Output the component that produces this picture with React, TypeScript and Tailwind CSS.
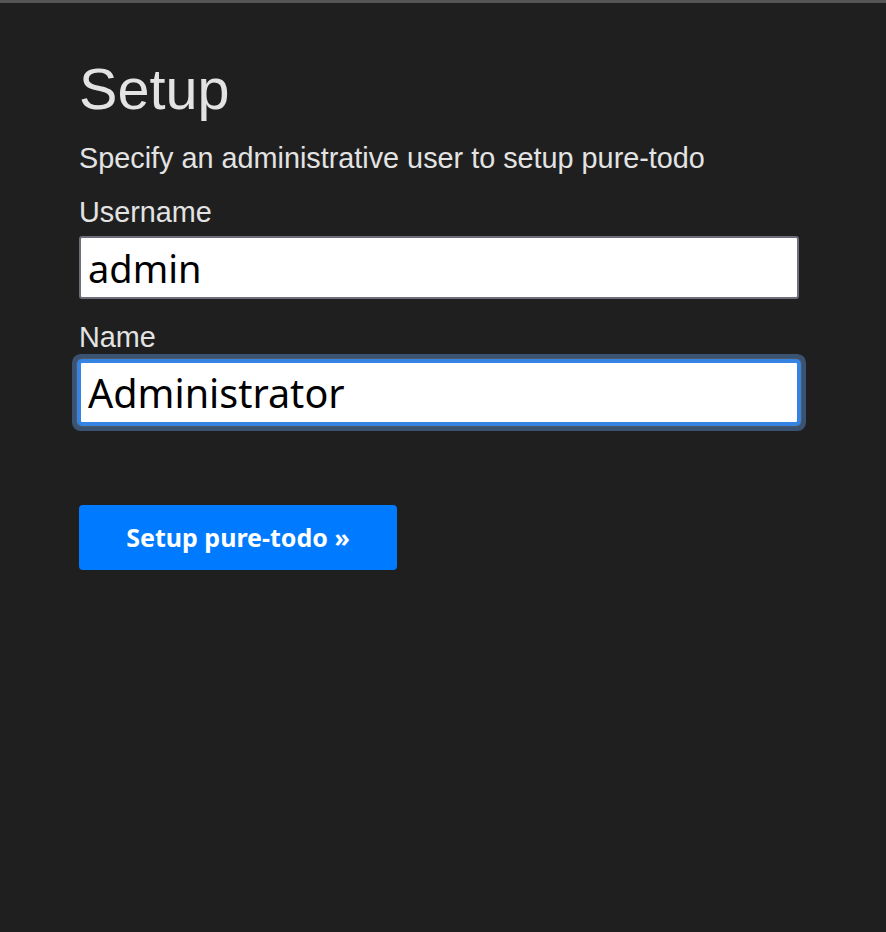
import React from 'react';

export default function App() {
  return (
    <div className="min-h-[932px] bg-[#1f1f1f] border-t-[3px] border-[#555555] font-['Liberation_Sans',Arial,sans-serif] text-[#e3e3e3]">
      <div className="px-[79px] pt-[54px] max-w-[878px]">
        <h1 className="text-[57.6px] leading-[64px]">Setup</h1>
        <p className="mt-[20px] text-[28.8px] leading-[34px]">Specify an administrative user to setup pure-todo</p>

        <form className="mt-[20px] w-[720px]">
          <label className="block text-[28.8px] leading-[34px]">Username</label>
          <input
            type="text"
            defaultValue="admin"
            className="mt-[7px] block w-[720px] h-[63px] bg-white text-black rounded-[3px] border-2 border-[#6e6d7a] px-[7px] text-[38px] font-['Noto_Sans',sans-serif] outline-none"
          />

          <label className="block mt-[21px] text-[28.8px] leading-[34px]">Name</label>
          <input
            type="text"
            defaultValue="Administrator"
            className="mt-[7px] block w-[720px] h-[63px] bg-white text-black rounded-[3px] border-2 border-[#3584e4] px-[7px] text-[39.5px] font-['Noto_Sans',sans-serif] outline-none shadow-[0_0_0_2px_#3584e4,0_0_0_3px_#4f5865,0_0_0_7px_#3a5372]"
          />

          <button
            type="button"
            className="mt-[81px] w-[318px] h-[65px] bg-[#007bff] text-white rounded-[4px] font-bold text-[25px] font-['Noto_Sans',sans-serif]"
          >
            Setup pure-todo »
          </button>
        </form>
      </div>
    </div>
  );
}
